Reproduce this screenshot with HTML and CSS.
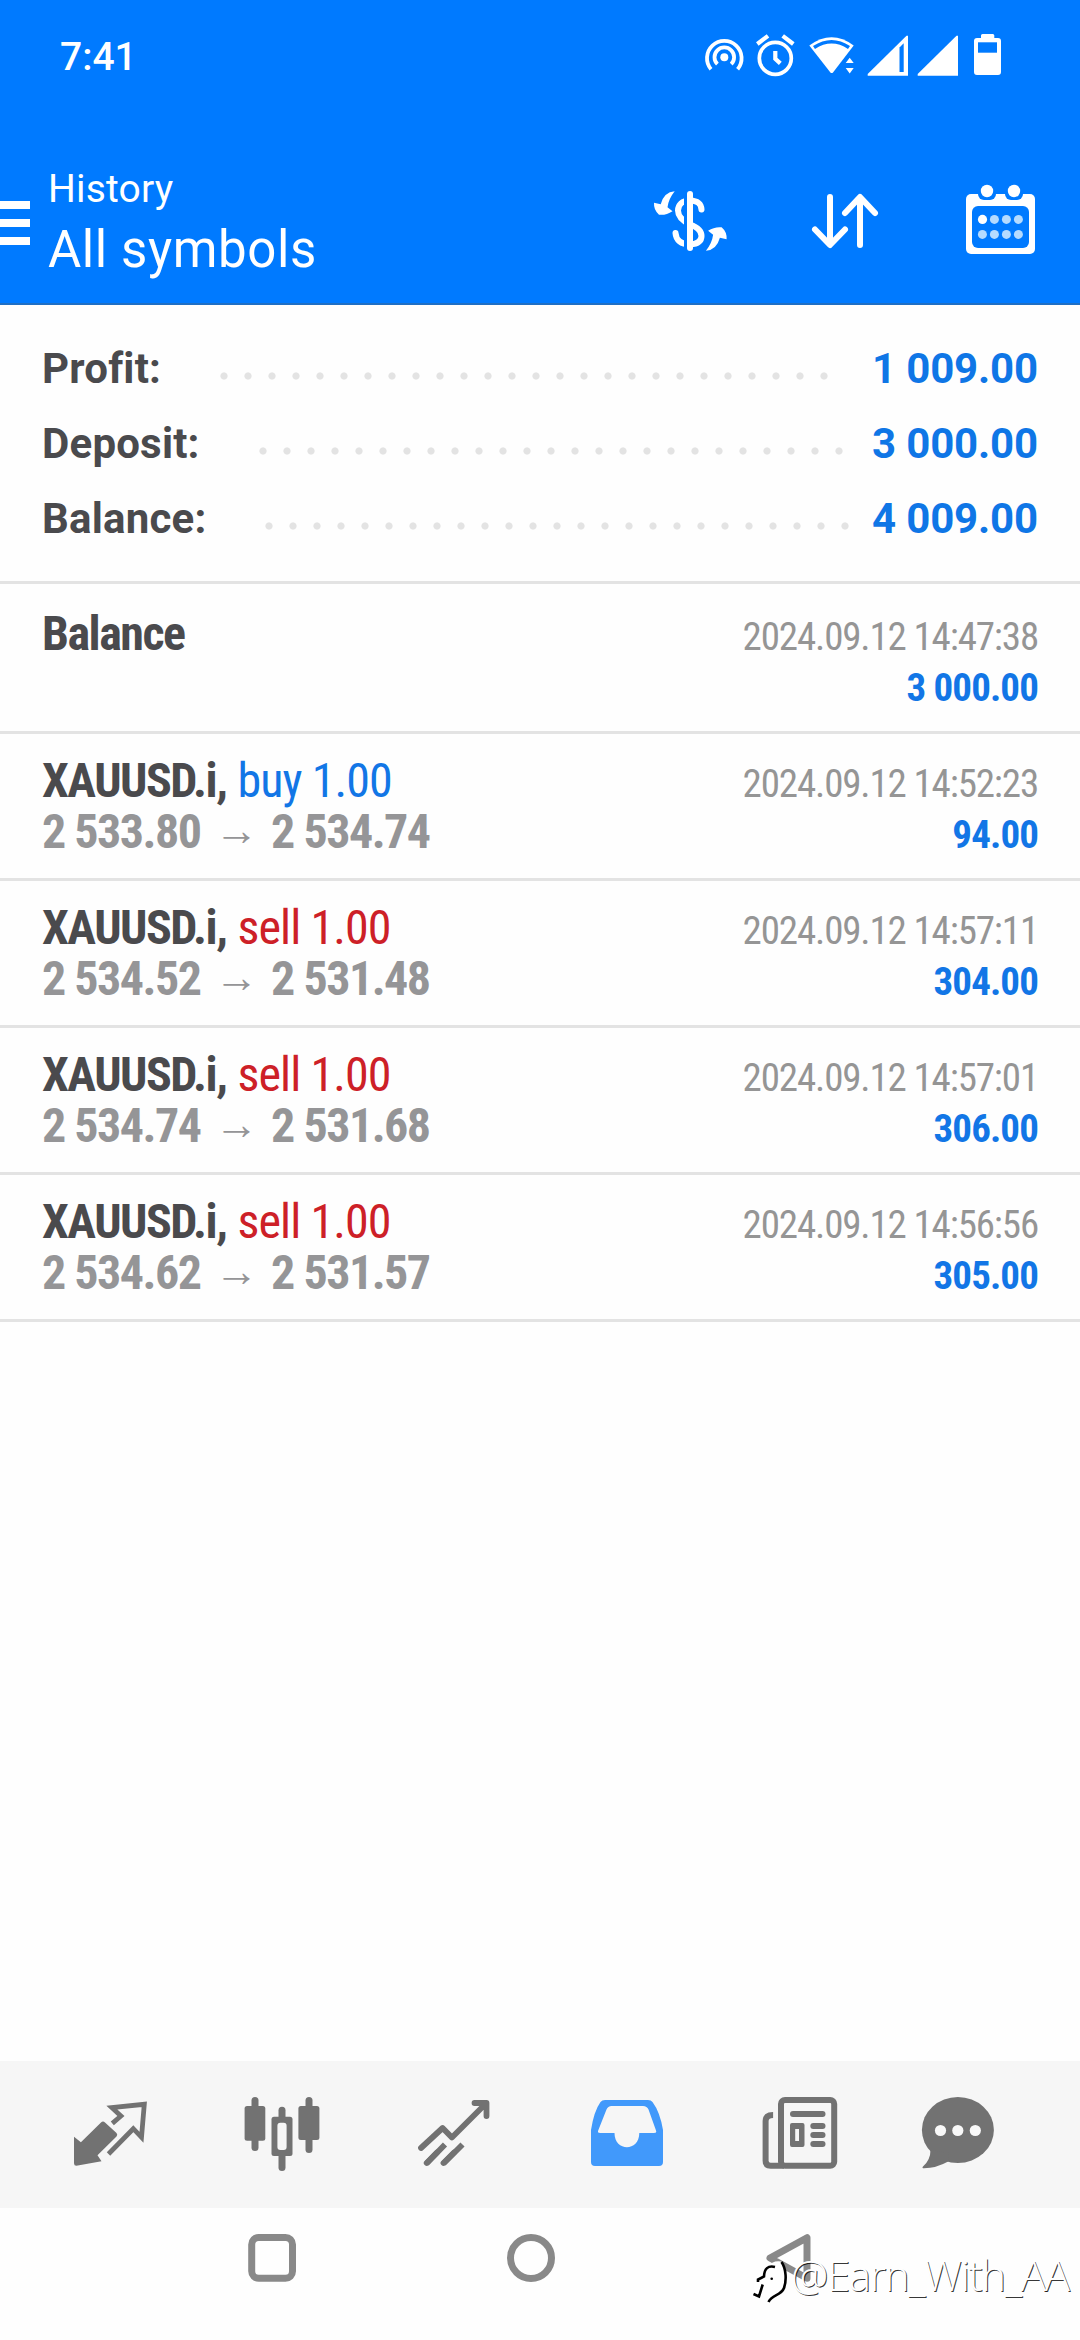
FILE: index.html
```html
<!DOCTYPE html>
<html lang="en">
<head>
<meta charset="utf-8">
<title>History</title>
<link rel="stylesheet" href="styles.css">
</head>
<body>
<div class="screen">
  <header class="top">
    <div class="status">
      <span class="clock">7:41</span>
      <div class="status-icons">
        <svg width="51" height="48" fill="none" stroke="#fff" stroke-width="3.8"><circle cx="24.3" cy="24.3" r="4" fill="#fff" stroke="none"/><path d="M17.4 31.2a9.8 9.8 0 1 1 13.8 0"/><path d="M11 36.2a17.3 17.3 0 1 1 26.6 0"/></svg>
        <svg width="56" height="48" fill="none" stroke="#fff" stroke-width="3.7"><circle cx="24.3" cy="25.3" r="16"/><path d="M24.3 18v7.8l5 4.6M6.3 11l10.7-8.2M31.7 2.800l10.600 8.200" stroke-width="4.200"/></svg>
        <svg width="57" height="48"><path d="M2.300 12.500Q24.700-4 46.700 12.500L26 39.500q-1.300 1-2.600 0z" fill="#fff"/><path d="M7 14.500Q24.700 3 42 14.500" fill="none" stroke="#007aff" stroke-width="3.600"/><path d="M38.700 30l4-5.300 4 5.300zM38.700 35h8l-4 5.500z" fill="#fff"/></svg>
        <svg width="50" height="48"><path d="M3.700 42.700V41L42.500 2.700H44v40z" fill="#fff"/><path d="M35.500 14.500l4.200-4.200V39h-4.200z" fill="#007aff"/></svg>
        <svg width="49" height="48"><path d="M3.700 42.700V41L42.500 2.700H44v40z" fill="#fff"/></svg>
        <svg width="48" height="48"><path d="M18 5V2.500q0-1.500 1.500-1.500h10.300q1.500 0 1.500 1.500V5H35q3 0 3 3v31q0 3-3 3H14q-3 0-3-3V8q0-3 3-3z" fill="#fff"/><path d="M15 9.300h19v10.400H15z" fill="#007aff"/></svg>
      </div>
    </div>
    <div class="appbar">
      <span class="menu"><i></i><i></i><i></i></span>
      <div class="titles">
        <div class="section">History</div>
        <div class="filter">All symbols</div>
      </div>
      <div class="actions">
        <svg width="84" height="84"><g fill="none" stroke="#fff" stroke-width="6"><path d="M53.500 26.500C53 20 49 17.700 42 17.500 34 17.500 30 22 30 27.500 30 34 35 38 42 41.500 49 44 53.500 47 53.500 53 53.500 58.500 49 61 42 61.500 33 61.500 28 57 27.500 50" stroke-linecap="round"/><path d="M38 6v64" stroke="#007aff" stroke-width="4"/><path d="M42 11v54" stroke-linecap="round"/></g><path id="turn" d="M26.700 8.300Q16 9 12.700 21.300L6 19.800Q5.500 27 11 31.700 18 32.500 24.500 28.200L19.500 24.300Q20.500 16 26.700 8.300z" fill="#fff"/><use href="#turn" transform="rotate(180 42.300 38)"/></svg>
        <svg width="84" height="84" fill="none" stroke="#fff" stroke-width="6" stroke-linecap="round" stroke-linejoin="round"><path d="M27 14v47.500M12 46.500l15 15.500 15-15.500M57 62V15M42 30l15-16 15 16"/></svg>
        <svg width="84" height="84"><rect x="8" y="11" width="69" height="60" rx="5" fill="#fff"/><g fill="#007aff"><rect x="14" y="23" width="57" height="42" rx="6"/><rect x="20" y="-1" width="18" height="18" rx="6"/><rect x="47" y="-1" width="18" height="18" rx="6"/></g><g fill="#fff"><circle cx="29" cy="8" r="6.200"/><circle cx="56" cy="8" r="6.200"/><circle cx="24.500" cy="36.400" r="4.600"/></g><g fill="#b5dbff"><circle cx="36.400" cy="36.400" r="4.500"/><circle cx="48.400" cy="36.400" r="4.500"/><circle cx="60.400" cy="36.400" r="4.500"/><circle cx="24.400" cy="51.400" r="4.500"/><circle cx="36.400" cy="51.400" r="4.500"/><circle cx="48.400" cy="51.400" r="4.500"/><circle cx="60.400" cy="51.400" r="4.500"/></g></svg>
      </div>
    </div>
  </header>

  <section class="summary">
    <div class="total"><span class="label">Profit:</span><span class="dots" style="width:624px"></span><span class="amount">1 009.00</span></div>
    <div class="total"><span class="label">Deposit:</span><span class="dots" style="width:600px"></span><span class="amount">3 000.00</span></div>
    <div class="total"><span class="label">Balance:</span><span class="dots" style="width:600px"></span><span class="amount">4 009.00</span></div>
  </section>

  <main class="deals">
    <div class="deal deal-balance">
      <div class="info"><div class="symbol">Balance</div></div>
      <div class="result"><div class="time">2024.09.12 14:47:38</div><div class="profit">3 000.00</div></div>
    </div>
    <div class="deal">
      <div class="info"><div class="symbol">XAUUSD.i, <span class="buy">buy 1.00</span></div><div class="prices">2 533.80<span class="arrow">→</span>2 534.74</div></div>
      <div class="result"><div class="time">2024.09.12 14:52:23</div><div class="profit">94.00</div></div>
    </div>
    <div class="deal">
      <div class="info"><div class="symbol">XAUUSD.i, <span class="sell">sell 1.00</span></div><div class="prices">2 534.52<span class="arrow">→</span>2 531.48</div></div>
      <div class="result"><div class="time">2024.09.12 14:57:11</div><div class="profit">304.00</div></div>
    </div>
    <div class="deal">
      <div class="info"><div class="symbol">XAUUSD.i, <span class="sell">sell 1.00</span></div><div class="prices">2 534.74<span class="arrow">→</span>2 531.68</div></div>
      <div class="result"><div class="time">2024.09.12 14:57:01</div><div class="profit">306.00</div></div>
    </div>
    <div class="deal">
      <div class="info"><div class="symbol">XAUUSD.i, <span class="sell">sell 1.00</span></div><div class="prices">2 534.62<span class="arrow">→</span>2 531.57</div></div>
      <div class="result"><div class="time">2024.09.12 14:56:56</div><div class="profit">305.00</div></div>
    </div>
  </main>

  <nav class="tabs">
    <svg width="84" height="147"><path d="M6 75.700l6.900 5.600L33 61.500q2-2 4 0L48.500 72q1.500 1.500 0 3.500L29.500 94.300l4 6L8.400 104.700q-2.400 0-2.400-2.500z" fill="#727272"/><path d="M44.300 62.300l8.600-7.300-9-8.300 32.400-3.400-2.800 33-8.200-8.600L40.500 93" fill="none" stroke="#727272" stroke-width="4.800"/></svg>
    <svg width="84" height="147" fill="#727272"><rect x="4.600" y="45" width="20.700" height="34.700" rx="2.500"/><rect x="11.500" y="36" width="7" height="54" rx="3.500"/><rect x="58.400" y="45" width="21" height="34" rx="2.500"/><rect x="65.500" y="36" width="7" height="56" rx="3.500"/><rect x="38.500" y="45.700" width="7" height="64.300" rx="3.500"/><rect x="31.500" y="55.700" width="21" height="39.300" rx="2.500"/><rect x="37.400" y="61.700" width="9.200" height="27.300" rx="3" fill="#f6f6f6"/></svg>
    <svg width="84" height="147" fill="none" stroke="#727272" stroke-width="5.800" stroke-linecap="round" stroke-linejoin="round"><path d="M9 87l21.600-20 9.300 9.500 34.500-34.500M62.500 42h12V55"/><path d="M33 83.500L14.500 102.500M50.500 83.500L31.500 102.500" stroke-linecap="butt"/><path d="M25 91.500L14.700 102M42 91.500L31.500 102"/></svg>
    <svg width="84" height="147"><path fill-rule="evenodd" d="M6 69Q9 50 15.500 41 17 39 20 39H63q3 0 4.500 2 7.500 10 10.500 28v32q0 4-4 4H10q-4 0-4-4zM13.200 69.500q-1 2.500 2 2.500H29.500c0 19 24.800 19 24.800 0H69q3 0 2-2.500L63.500 48.500Q62 45 58 45H26.500Q23 45 21.500 48.500z" fill="#4199fb"/></svg>
    <svg width="84" height="147"><g fill="none" stroke="#727272" stroke-width="6"><rect x="23" y="39" width="53.200" height="65.700" rx="4"/><path d="M15.100 54q-7.500 0-7.500 6v39.700q0 5 5 5H26"/></g><g fill="#727272"><rect x="32" y="50" width="35.500" height="6" rx="3"/><path fill-rule="evenodd" d="M34 62h10.500q2 0 2 2v20q0 2-2 2H34q-2 0-2-2V64q0-2 2-2zm3.200 6v12H41V68z"/><rect x="52.300" y="62" width="15.200" height="6" rx="3"/><rect x="52.300" y="71" width="15.200" height="6" rx="3"/><rect x="52.300" y="80" width="15.200" height="6" rx="3"/></g></svg>
    <svg width="84" height="147"><g fill="#727272"><ellipse cx="41.900" cy="69" rx="36" ry="33"/><path d="M14.500 89Q14.500 99 7 105.500q-1.500 1.800 1 1.800 12 0 24.700-7L33 92z"/></g><g fill="#f9f9f9"><circle cx="24.500" cy="69.500" r="5.600"/><circle cx="41.800" cy="69.500" r="5.600"/><circle cx="59.300" cy="69.500" r="5.600"/></g></svg>
  </nav>

  <footer class="system">
    <svg width="60" height="60" fill="none" stroke="#898989" stroke-width="7"><rect x="9.700" y="9.500" width="40.800" height="40.800" rx="7"/></svg>
    <svg width="60" height="60" fill="none" stroke="#898989" stroke-width="7"><circle cx="30" cy="30" r="20.500"/></svg>
    <svg width="60" height="60" fill="none" stroke="#898989" stroke-width="7" stroke-linejoin="round"><path d="M48 9.700v40.600L11 30z"/></svg>
  </footer>

  <div class="watermark">
    <svg width="41" height="50" fill="none"><path d="M17 11Q23 4 31 5.500 37 14 35 31 31 40 20 42L3 37.500 6 20z" fill="#fff"/><g stroke="#000" stroke-width="2.600"><path d="M31.500 6C36.500 13 36.500 25 34 32 31 40 22 38 18.500 46M25 11Q14.500 8.500 14 20.500L8 23.500v2.500M12.700 28.500L9 40.500 3.500 38"/></g><circle cx="21.700" cy="22.700" r="1.300" fill="#000"/></svg>
    <span>@Earn_With_AA</span>
  </div>
</div>
</body>
</html>
```
FILE: styles.css
```css
* { box-sizing: border-box; }

body {
  margin: 0;
  background: #fefefe;
  font-family: Roboto, "Noto Sans", sans-serif;
}

svg { display: block; flex: none; }

.screen {
  position: relative;
  display: flex;
  flex-direction: column;
  width: 1080px;
  height: 2340px;
  overflow: hidden;
}

.top {
  height: 305px;
  background: #007aff;
  color: #fff;
  border-bottom: 2px solid #1f6fc4;
}

.status {
  display: flex;
  justify-content: space-between;
  align-items: center;
  height: 113px;
  padding: 0 69px 0 60px;
}

.clock { font-size: 39px; font-weight: 500; }

.status-icons { display: flex; }

.appbar {
  display: flex;
  height: 190px;
}

.menu {
  display: flex;
  flex-direction: column;
  gap: 10px;
  width: 30px;
  padding-top: 88px;
}

.menu i { height: 8px; background: #fff; }

.titles { flex: 1; padding: 48px 0 0 18px; }
.section { font-size: 39px; line-height: 56px; letter-spacing: 0.2px; }
.filter { font-size: 51px; line-height: 66px; letter-spacing: 0.6px; }

.actions {
  display: flex;
  gap: 71px;
  padding: 70px 38px 0 0;
}

.summary {
  padding: 26px 42px 25px;
  border-bottom: 3px solid #e3e3e3;
}

.total {
  display: flex;
  align-items: center;
  height: 75px;
  font-size: 42px;
  font-weight: 700;
  color: #4a4a4d;
}

.label { letter-spacing: 0.2px; }

.dots {
  height: 24px;
  margin: 14px 0 0 51px;
  background: radial-gradient(circle at center, #e3e3e3 3.2px, transparent 4px) 0 0 / 24px 24px;
}

.amount { margin-left: auto; letter-spacing: -0.15px; color: #0f76e6; }

.deals {
  flex: 1;
  font-stretch: 75%;
}

.deal {
  display: flex;
  justify-content: space-between;
  height: 147px;
  padding: 21px 42px 0;
  border-bottom: 3px solid #e3e3e3;
  line-height: 51px;
  white-space: nowrap;
}

.deal-balance { height: 150px; padding-top: 24px; }

.symbol, .prices {
  font-size: 48px;
  font-weight: 700;
  letter-spacing: -1.5px;
  color: #4a4a4d;
}

.prices { color: #959597; }

.buy, .sell { margin-left: 1.5px; font-weight: 400; letter-spacing: -0.9px; }
.buy { color: #1276e6; }
.sell { color: #cd2027; }

.arrow {
  margin: 0 14px;
  font-size: 44px;
  line-height: 0;
  vertical-align: 3px;
}

.result {
  padding-top: 4px;
  text-align: right;
  font-size: 39px;
}

.time { color: #959595; letter-spacing: -1.15px; }
.profit { color: #1276e6; font-weight: 700; letter-spacing: -0.9px; }

.tabs {
  display: grid;
  grid-template-columns: 172px 171px 173px 173px 174px 142px;
  justify-items: center;
  height: 147px;
  padding-left: 24px;
  background: #f6f6f6;
}

.system {
  display: grid;
  grid-template-columns: repeat(3, 258.5px);
  justify-items: center;
  height: 132px;
  padding: 20px 0 0 143px;
}

/* Author mark laid over the system bar */
.watermark {
  position: absolute;
  left: 750px;
  top: 2256px;
  display: flex;
  color: #fff;
  font: 300 42px/38px "Open Sans", sans-serif;
  letter-spacing: -1.3px;
  text-shadow: 1px 1px 0 rgba(0, 0, 0, 0.8);
}
```
